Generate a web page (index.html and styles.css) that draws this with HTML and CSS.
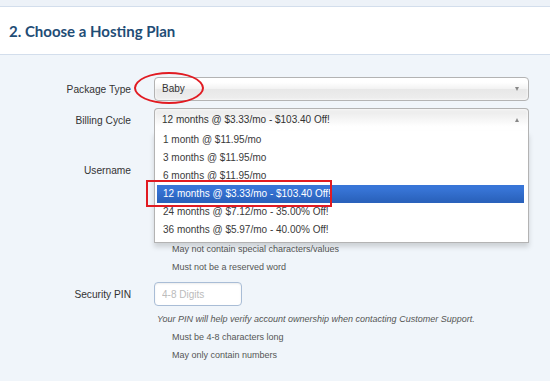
FILE: index.html
```html
<!DOCTYPE html>
<html lang="en">
<head>
  <meta charset="UTF-8">
  <meta name="viewport" content="width=device-width, initial-scale=1.0">
  <title>Choose a Hosting Plan</title>
  <link rel="stylesheet" href="styles.css">
</head>
<body>

<div class="strip"></div>
<div class="section-head">
  <h2>2. Choose a Hosting Plan</h2>
</div>

<div class="form">
  <div class="row">
    <label class="label">Package Type</label>
    <div class="field">
      <div class="select">
        <span>Baby</span>
        <b class="arrow down"></b>
      </div>
      <div class="circle"></div>
    </div>
  </div>

  <div class="row">
    <label class="label">Billing Cycle</label>
    <div class="field">
      <div class="select open">
        <span>12 months @ $3.33/mo - $103.40 Off!</span>
        <b class="arrow up"></b>
      </div>
      <div class="drop">
        <ul class="results">
          <li>1 month @ $11.95/mo</li>
          <li>3 months @ $11.95/mo</li>
          <li>6 months @ $11.95/mo</li>
          <li class="highlighted">12 months @ $3.33/mo - $103.40 Off!</li>
          <li>24 months @ $7.12/mo - 35.00% Off!</li>
          <li>36 months @ $5.97/mo - 40.00% Off!</li>
        </ul>
        <div class="box"></div>
      </div>
    </div>
  </div>

  <div class="row username">
    <label class="label">Username</label>
    <div class="field">
      <input class="input wide" type="text">
    </div>
  </div>
  <ul class="rules after-drop">
    <li>May not contain special characters/values</li>
    <li>Must not be a reserved word</li>
  </ul>

  <div class="row pin">
    <label class="label">Security PIN</label>
    <div class="field">
      <input class="input" type="text" placeholder="4-8 Digits">
    </div>
  </div>
  <p class="note">Your PIN will help verify account ownership when contacting Customer Support.</p>
  <ul class="rules">
    <li>Must be 4-8 characters long</li>
    <li>May only contain numbers</li>
  </ul>
</div>

</body>
</html>
```

FILE: styles.css
```css
body {
  margin: 0;
  background: #f0f5fa;
  font-family: 'Liberation Sans', Arial, sans-serif;
  color: #333;
}
.strip {
  height: 6px;
  background: #edf2f8;
  border-bottom: 1px solid #d3deec;
}
.section-head {
  background: #fff;
  height: 47px;
  border-bottom: 1px solid #d3deec;
  display: flex;
  align-items: center;
  padding-left: 9px;
}
.section-head h2 {
  margin: 0;
  font-family: 'Lato', sans-serif;
  font-weight: 700;
  font-size: 15px;
  color: #1f4d76;
}
.form {
  padding-top: 22px;
}
.row {
  display: flex;
  align-items: center;
  margin-bottom: 7px;
}
.label {
  width: 131px;
  text-align: right;
  font-size: 10.2px;
  color: #333;
  margin-right: 23px;
}
.field {
  position: relative;
  width: 375px;
}
.select {
  height: 22px;
  border: 1px solid #b3b3b3;
  border-radius: 4px;
  background: linear-gradient(#fff 20%, #f2f2f2 50%, #e8e8e8 52%, #eee);
  font-size: 10px;
  line-height: 22px;
  padding-left: 7px;
  position: relative;
  box-shadow: 0 0 3px #fff inset;
}
.select.open {
  background: linear-gradient(#eee 20%, #fff 80%);
  border-radius: 4px 4px 0 0;
  border-bottom-color: #fff;
}
.arrow {
  position: absolute;
  right: 9px;
  top: 9px;
  width: 0;
  height: 0;
  border-left: 2.5px solid transparent;
  border-right: 2.5px solid transparent;
}
.arrow.down {
  border-top: 4px solid #888;
}
.arrow.up {
  border-bottom: 4px solid #888;
}
.circle {
  position: absolute;
  left: -20px;
  top: -5px;
  width: 66px;
  height: 28px;
  border: 2px solid #e11b22;
  border-radius: 50%;
}
.drop {
  position: absolute;
  left: 0;
  top: 23px;
  width: 373px;
  background: #fff;
  border: 1px solid #b3b3b3;
  border-top: 0;
  box-shadow: 0 4px 5px rgba(0, 0, 0, 0.15);
  z-index: 5;
}
.results {
  list-style: none;
  margin: 0 4px 3px 0;
  padding: 0 0 0 2px;
}
.results li {
  height: 18px;
  line-height: 18px;
  font-size: 10px;
  padding-left: 6px;
  color: #3a3a3a;
}
.results li.highlighted {
  background: linear-gradient(#3875d7 20%, #2a62bc 90%);
  color: #fff;
}
.box {
  position: absolute;
  left: -9px;
  top: 49px;
  width: 182px;
  height: 23px;
  border: 2px solid #e11b22;
}
.username {
  margin-top: 26px;
  margin-bottom: 4px;
}
.input {
  box-sizing: border-box;
  height: 24px;
  width: 88px;
  border: 1px solid #a9bdd6;
  border-radius: 4px;
  background: #fff;
  font-family: inherit;
  font-size: 10px;
  padding: 0 7px;
  box-shadow: 0 1px 2px rgba(0, 0, 0, 0.08) inset;
}
.input.wide {
  width: 160px;
}
.input::placeholder {
  color: #bbb;
}
.rules {
  list-style: none;
  margin: 0;
  padding-left: 172px;
}
.rules.after-drop {
  margin-top: 58px;
}
.rules li {
  font-size: 9px;
  line-height: 18px;
  color: #555;
}
.pin {
  margin-top: 6px;
  margin-bottom: 4px;
}
.note {
  margin: 0;
  padding-left: 157px;
  font-size: 9px;
  line-height: 18px;
  font-style: italic;
  color: #555;
}
```
